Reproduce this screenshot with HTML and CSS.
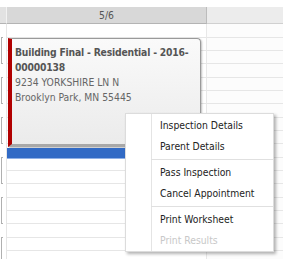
FILE: index.html
```html
<!DOCTYPE html>
<html lang="en">
<head>
    <meta charset="UTF-8">
    <meta name="viewport" content="width=device-width, initial-scale=1.0">
    <title>Inspection Schedule</title>
    <link rel="stylesheet" href="styles.css">
</head>
<body>
    <div class="calendar">
        <div class="hd hd-left"></div>
        <div class="hd hd-main">5/6</div>
        <div class="hd hd-right"></div>

        <div class="col-left">
            <div class="bracket"></div>
            <div class="bracket"></div>
            <div class="bracket"></div>
            <div class="bracket"></div>
            <div class="bracket"></div>
            <div class="bracket"></div>
        </div>
        <div class="col-main">
            <div class="appt">
                <div class="appt-title">Building Final - Residential - 2016-<wbr>00000138</div>
                <div class="appt-line">9234 YORKSHIRE LN N</div>
                <div class="appt-line">Brooklyn Park, MN 55445</div>
            </div>
            <div class="appt-bar"></div>
        </div>
        <div class="col-right"></div>
    </div>

    <!-- context menu -->
    <ul class="menu">
        <li class="menu-item">Inspection Details</li>
        <li class="menu-item">Parent Details</li>
        <li class="menu-sep"></li>
        <li class="menu-item">Pass Inspection</li>
        <li class="menu-item">Cancel Appointment</li>
        <li class="menu-sep"></li>
        <li class="menu-item">Print Worksheet</li>
        <li class="menu-item disabled">Print Results</li>
    </ul>
</body>
</html>
```

FILE: styles.css
```css
body {
    margin: 0;
    font-family: "DejaVu Sans Condensed", "Liberation Sans", sans-serif;
    font-size: 10.3px;
    background-color: #fff;
    overflow: hidden;
}
.calendar {
    display: grid;
    grid-template-columns: 7px 200px 1fr;
    grid-template-rows: 17px 235px;
    margin-top: 7px;
}
.hd {
    border-bottom: 1px solid #b4b4b4;
    color: #555;
    text-align: center;
    line-height: 17px;
}
.hd-left {
    background-color: #e2e2e2;
    border-right: 1px solid #f2f2f2;
}
.hd-main {
    background-color: #d8d8d8;
    border-right: 1px solid #bcbcbc;
}
.hd-right {
    background-color: #ececec;
    border-bottom-color: #d0d0d0;
}
.col-left {
    border-right: 1px solid #e6e6e6;
    padding-top: 13px;
}
.bracket {
    width: 1px;
    height: 25px;
    margin: 0 0 13px 1px;
    border: 1px solid #b0b0b0;
    border-right: none;
}
.col-main,
.col-right {
    background-image: repeating-linear-gradient(to bottom,
        transparent 0, transparent 13px, #e6e6e6 13px, #e6e6e6 14px,
        transparent 14px, transparent 26px, #e6e6e6 26px, #e6e6e6 27px,
        transparent 27px, transparent 39px, #e6e6e6 39px, #e6e6e6 40px);
}
.col-main {
    padding-top: 14px;
    border-right: 1px solid #e8e8e8;
}
.col-right {
    background-color: #fcfcfc;
}
.appt {
    height: 99px;
    margin: 0 5px 0 1px;
    padding: 6px 4px 0 3px;
    background: linear-gradient(#fafafa, #ebebeb);
    border: 1px solid #9a9a9a;
    border-left: 4px solid #b10000;
    border-bottom: 3px solid #a8a8a8;
    border-top-right-radius: 4px;
    box-shadow: 1px 1px 2px rgba(0, 0, 0, 0.25);
    line-height: 15px;
    color: #666;
}
.appt-title {
    font-weight: bold;
    color: #555;
    letter-spacing: -0.2px;
}
.appt-bar {
    height: 10px;
    margin-top: 1px;
    background-color: #316ac5;
    border-bottom: 1px solid #8fb0e6;
}
.menu {
    position: absolute;
    left: 125px;
    top: 113px;
    width: 147px;
    margin: 0;
    padding: 1px 0 0;
    list-style: none;
    background: linear-gradient(to right, #fff 0, #fff 25px, #e4e4e4 25px, #e4e4e4 26px, #fff 26px);
    border: 1px solid #dcdcdc;
    box-shadow: 2px 2px 3px rgba(0, 0, 0, 0.3);
}
.menu-item {
    height: 21px;
    line-height: 21px;
    padding-left: 34px;
    color: #222;
}
.menu-item.disabled {
    color: #c8c8c8;
}
.menu-sep {
    height: 5px;
    margin-left: 25px;
    background: linear-gradient(transparent 2px, #e0e0e0 2px, #e0e0e0 3px, transparent 3px);
}
```
